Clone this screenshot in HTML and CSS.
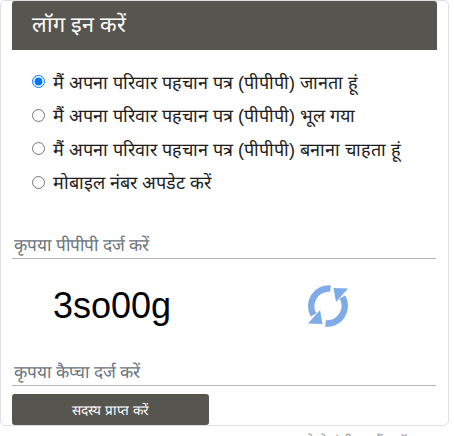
FILE: index.html
```html
<!DOCTYPE html>
<html lang="hi">
<head>
    <meta charset="UTF-8">
    <meta name="viewport" content="width=device-width, initial-scale=1.0">
    <title>लॉग इन करें</title>
    <link rel="stylesheet" href="styles.css">
</head>
<body>
    <div class="login-card">
        <div class="login-header">लॉग इन करें</div>
        <div class="radio-list">
            <label class="radio-row"><input type="radio" name="mode" checked>मैं अपना परिवार पहचान पत्र (पीपीपी) जानता हूं</label>
            <label class="radio-row"><input type="radio" name="mode">मैं अपना परिवार पहचान पत्र (पीपीपी) भूल गया</label>
            <label class="radio-row"><input type="radio" name="mode">मैं अपना परिवार पहचान पत्र (पीपीपी) बनाना चाहता हूं</label>
            <label class="radio-row"><input type="radio" name="mode">मोबाइल नंबर अपडेट करें</label>
        </div>
        <input class="line-input ppp-input" type="text" placeholder="कृपया पीपीपी दर्ज करें">
        <div class="captcha-row">
            <span class="captcha-text">3so00g</span>
            <svg class="refresh-icon" viewBox="0 0 44 44" width="44" height="44">
                <path d="M24.500 4.500 A17.800 17.800 0 0 0 7.500 31" fill="none" stroke="#7fabe8" stroke-width="6.500"/>
                <path d="M2 39.500 L16.500 40 L14 26 Z" fill="#7fabe8"/>
                <path d="M19.500 39.500 A17.800 17.800 0 0 0 36.500 13" fill="none" stroke="#7fabe8" stroke-width="6.500"/>
                <path d="M42 4.500 L27.500 4 L30 18 Z" fill="#7fabe8"/>
            </svg>
        </div>
        <input class="line-input" type="text" placeholder="कृपया कैप्चा दर्ज करें">
        <button class="submit-btn">सदस्य प्राप्त करें</button>
    </div>
    <div class="footer-link">पहले से पंजीकृत हैं? लॉग इन</div>
</body>
</html>
```

FILE: styles.css
```css
html, body {
    height: 100%;
}

body {
    margin: 0;
    overflow: hidden;
    background-color: white;
    font-family: 'Liberation Sans', Arial, sans-serif;
    color: #212529;
}

.login-card {
    box-sizing: border-box;
    width: 449px;
    height: 426px;
    padding: 0 11px;
    background-color: white;
    border: 1px solid #e0e0e0;
    border-radius: 5px;
}

.login-header {
    height: 49px;
    padding-left: 20px;
    box-sizing: border-box;
    line-height: 47px;
    font-size: 21.6px;
    color: white;
    background-color: #57554f;
    border-radius: 3px 3px 0 0;
}

.radio-list {
    margin-top: 15px;
    padding-left: 20px;
}

.radio-row {
    display: flex;
    align-items: center;
    gap: 8px;
    height: 33.500px;
    font-size: 18px;
    color: #1c1c1c;
    white-space: nowrap;
}

.radio-row input {
    width: 13px;
    height: 13px;
    margin: 0;
}

.line-input {
    display: block;
    box-sizing: border-box;
    width: 424px;
    height: 26px;
    padding: 0 2px;
    border: none;
    border-bottom: 1px solid #b5b5b5;
    outline: none;
    font-family: inherit;
    font-size: 17.300px;
    background: transparent;
}

.line-input::placeholder {
    color: #6c757d;
    opacity: 1;
}

.ppp-input {
    margin-top: 34px;
}

.captcha-row {
    display: flex;
    align-items: center;
    box-sizing: border-box;
    height: 101px;
    padding: 0 0 8px 41px;
}

.captcha-text {
    width: 253px;
    font-size: 36px;
    color: black;
}

.submit-btn {
    display: block;
    width: 197px;
    height: 31px;
    margin-top: 8px;
    padding: 0;
    border: none;
    border-radius: 3px;
    font-family: inherit;
    font-size: 13.600px;
    color: white;
    background-color: #57554f;
}

.footer-link {
    margin-top: 5px;
    padding-left: 290px;
    font-size: 14px;
    line-height: 20px;
    color: #999;
    white-space: nowrap;
}
```
